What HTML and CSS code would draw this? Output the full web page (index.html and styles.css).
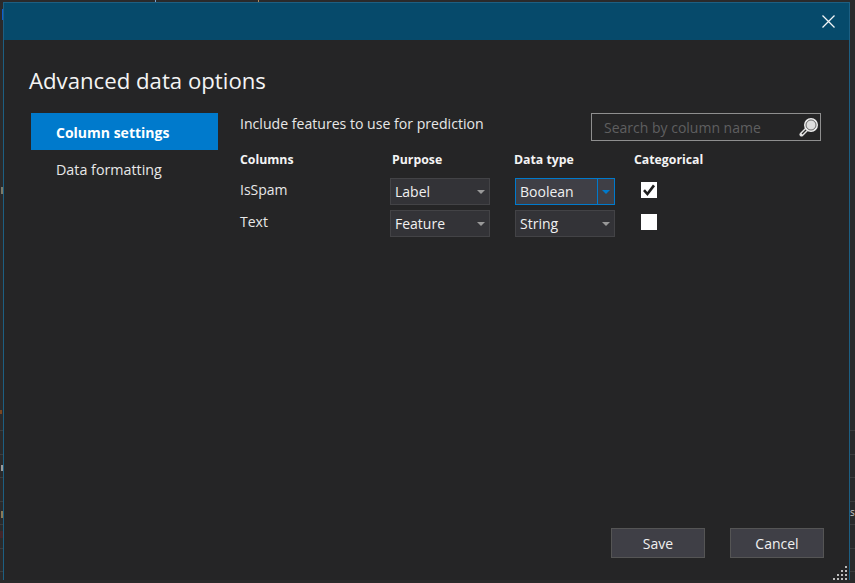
FILE: index.html
```html
<!DOCTYPE html>
<html lang="en">
<head>
  <meta charset="UTF-8" />
  <meta name="viewport" content="width=device-width, initial-scale=1.0" />
  <title>Advanced data options</title>
  <link rel="stylesheet" href="styles.css">
</head>
<body>
  <!-- what shows of the window behind the dialog -->
  <div class="behind behind-left">
    <div class="lines"></div>
    <div class="bit bit-tab"></div>
    <div class="bit bit-v"></div>
    <div class="bit bit-orange"></div>
    <div class="bit bit-z"></div>
    <div class="bit bit-n"></div>
    <div class="bit bit-red"></div>
  </div>
  <div class="behind behind-right">
    <div class="lines"></div>
    <span class="bit-s">s</span>
  </div>
  <div class="bit bit-top1"></div>
  <div class="bit bit-top2"></div>

  <div class="dialog">
    <div class="titlebar">
      <svg class="close" width="13" height="13" viewBox="0 0 13 13">
        <path d="M0.5 0.5 L12.5 12.5 M12.5 0.5 L0.5 12.5" stroke="#f2f6f8" stroke-width="1.3" fill="none" />
      </svg>
    </div>

    <div class="content">
      <h1>Advanced data options</h1>

      <div class="main">
        <div class="sidebar">
          <div class="side-item active">Column settings</div>
          <div class="side-item">Data formatting</div>
        </div>

        <div class="panel">
          <div class="panel-top">
            <div class="intro">Include features to use for prediction</div>
            <div class="search">
              <span>Search by column name</span>
              <svg width="20" height="20" viewBox="0 0 20 20">
                <path d="M7.5 12.5 L2.5 17.5" stroke="#e4e4e4" stroke-width="4" stroke-linecap="round" />
                <path d="M7.5 12.5 L3 17" stroke="#2c2c2c" stroke-width="1.2" />
                <circle cx="12" cy="8" r="6.2" fill="#dedede" stroke="#ececec" stroke-width="1.6" />
                <circle cx="12" cy="8" r="5" fill="none" stroke="#4a4a4a" stroke-width="0.8" />
              </svg>
            </div>
          </div>

          <div class="columns">
            <div class="head">Columns</div>
            <div class="head head-purpose">Purpose</div>
            <div class="head head-type">Data type</div>
            <div class="head">Categorical</div>

            <div class="name">IsSpam</div>
            <div class="select"><span>Label</span><i class="arrow-box"><b class="arrow"></b></i></div>
            <div class="select focused"><span>Boolean</span><i class="arrow-box"><b class="arrow"></b></i></div>
            <div class="check-cell">
              <div class="check">
                <svg width="14" height="14" viewBox="0 0 14 14">
                  <path d="M2 7.2 L5.4 11 L12 2.4" stroke="#1e1e1e" stroke-width="2.6" fill="none" />
                </svg>
              </div>
            </div>

            <div class="name">Text</div>
            <div class="select"><span>Feature</span><i class="arrow-box"><b class="arrow"></b></i></div>
            <div class="select"><span>String</span><i class="arrow-box"><b class="arrow"></b></i></div>
            <div class="check-cell"><div class="check"></div></div>
          </div>
        </div>
      </div>

      <div class="buttons">
        <button type="button">Save</button>
        <button type="button">Cancel</button>
      </div>
    </div>

    <svg class="grip" width="15" height="14" viewBox="0 0 15 14">
      <g fill="#bdbdbd">
        <rect x="12" y="0" width="2" height="2" />
        <rect x="12" y="4" width="2" height="2" />
        <rect x="8" y="4" width="2" height="2" />
        <rect x="12" y="8" width="2" height="2" />
        <rect x="8" y="8" width="2" height="2" />
        <rect x="4" y="8" width="2" height="2" />
        <rect x="12" y="12" width="2" height="2" />
        <rect x="8" y="12" width="2" height="2" />
        <rect x="4" y="12" width="2" height="2" />
        <rect x="0" y="12" width="2" height="2" />
      </g>
    </svg>
  </div>
</body>
</html>
```

FILE: styles.css
```css
html, body { height: 100%; }
body { margin: 0; background: #2a2a2b; font-family: "Open Sans", "Noto Sans", sans-serif; color: #f0f0f0; overflow: hidden; padding: 2px 5px 3px 3px; box-sizing: border-box; position: relative; }

.behind { position: absolute; top: 0; bottom: 0; overflow: hidden; }
.behind-left { left: 0; width: 3px; }
.behind-right { right: 0; width: 5px; }
.lines { position: absolute; top: 430px; left: 0; right: 0; bottom: 0; background: repeating-linear-gradient(to bottom, #3c3c3d 0, #3c3c3d 1px, transparent 1px, transparent 23.5px); }
.bit { position: absolute; }
.bit-tab { left: 2px; top: 9px; width: 1px; height: 11px; background: #0e5fd0; }
.bit-v { left: 1px; top: 187px; width: 2px; height: 7px; background: #7d7a68; }
.bit-orange { left: 0; top: 410px; width: 2px; height: 4px; background: #7a4520; }
.bit-z { left: 1px; top: 465px; width: 2px; height: 6px; background: #9a9a9a; }
.bit-n { left: 1px; top: 511px; width: 2px; height: 7px; background: #8a7a58; }
.bit-red { left: 0; top: 531px; width: 3px; height: 7px; background: #42262a; }
.bit-s { position: absolute; left: 0; top: 505px; font-size: 10px; line-height: 14px; color: #c8c8c8; }
.bit-top1 { left: 155px; top: 0; width: 1px; height: 2px; background: #7aa7d0; }
.bit-top2 { left: 258px; top: 0; width: 1px; height: 2px; background: #b08a5a; }

.dialog { position: relative; height: 100%; box-sizing: border-box; display: flex; flex-direction: column; background: #252526; border: 1px solid #1d5f82; border-bottom: none; }

.titlebar { height: 37px; flex: none; background: #064a6b; display: flex; align-items: center; justify-content: flex-end; padding-right: 14px; padding-bottom: 1px; box-sizing: border-box; }

.content { flex: 1; display: flex; flex-direction: column; padding: 0 25px 22px 26px; }

h1 { margin: 25px 0 16px -1px; font-size: 22.2px; line-height: 32px; font-weight: 400; color: #f4f4f4; }

.main { flex: 1; display: flex; gap: 22px; padding-left: 1px; }

.sidebar { width: 187px; flex: none; }
.side-item { height: 37px; line-height: 37px; padding-left: 25px; font-size: 14.3px; color: #e8e8e8; margin-top: 1px; box-sizing: border-box; }
.side-item.active { background: #007acc; color: #fff; font-weight: 700; font-size: 14px; padding-top: 2px; line-height: 36px; margin-top: 0; }

.panel { flex: 1; }
.panel-top { display: flex; justify-content: space-between; padding-right: 3px; }
.intro { font-size: 14.1px; line-height: 22px; color: #e8e8e8; }

.search { width: 230px; height: 28px; box-sizing: border-box; border: 1px solid #8f8f8f; display: flex; align-items: center; justify-content: space-between; padding: 0 1px 0 12px; font-size: 14px; color: #5f5f60; }

.columns { display: grid; grid-template-columns: 150px 125px 119px 1fr; grid-template-rows: 30px 32px 32px; margin-top: 7px; }
.head { font-size: 12.3px; font-weight: 700; line-height: 24px; color: #f4f4f4; }
.head-purpose { padding-left: 2px; }
.head-type { margin-left: -1px; }
.name { font-size: 14px; line-height: 22px; padding-top: 1px; color: #e8e8e8; }

.select { width: 100px; height: 27px; box-sizing: border-box; border: 1px solid #434346; background: #333337; display: flex; align-items: center; justify-content: space-between; font-size: 14px; color: #f0f0f0; padding-left: 4px; }
.select .arrow-box { width: 16px; height: 100%; display: flex; align-items: center; justify-content: center; }
.select .arrow { width: 0; height: 0; border-left: 4px solid transparent; border-right: 4px solid transparent; border-top: 4px solid #999; }
.select.focused { border-color: #007acc; background: #3f3f46; }
.select.focused .arrow-box { border-left: 1px solid #007acc; }
.select.focused .arrow { border-top-color: #007acc; }

.check-cell { padding: 4px 0 0 7px; }
.check { width: 16px; height: 16px; background: #fff; display: flex; align-items: center; justify-content: center; }

.buttons { display: flex; justify-content: flex-end; gap: 25px; }
button { width: 94px; height: 30px; box-sizing: border-box; background: #3f3f46; border: 1px solid #555555; color: #f0f0f0; font-family: inherit; font-size: 14px; padding: 0; }

.grip { position: absolute; right: 1px; bottom: 0; }
```
